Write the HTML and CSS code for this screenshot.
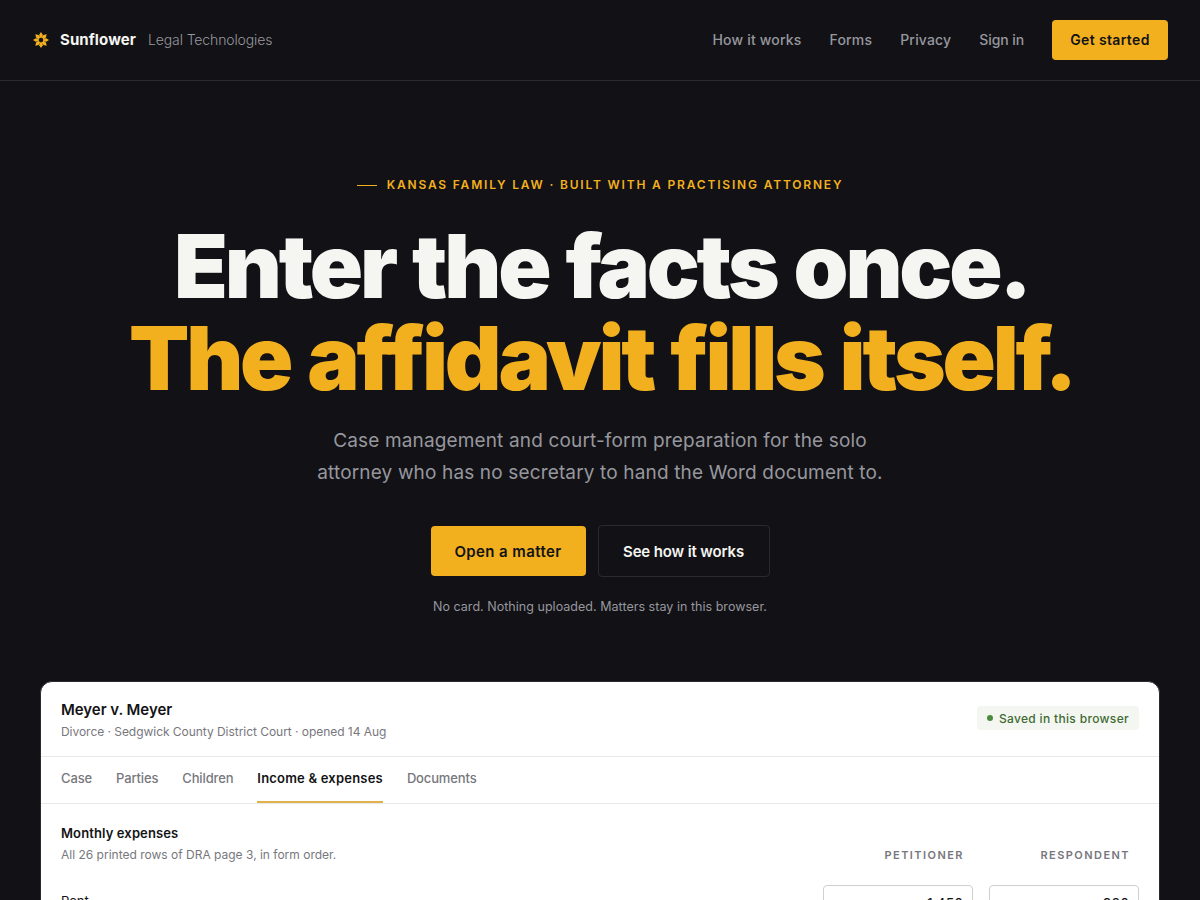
FILE: index.html
```html
<!DOCTYPE html>
<html lang="en">
<head>
<meta charset="utf-8">
<title>Sunflower Legal Technologies</title>
<link rel="stylesheet" href="styles.css">
</head>
<body>
<header class="topbar">
  <a class="brand" href="#">
    <svg class="brand-mark" viewBox="0 0 16 16" aria-hidden="true">
      <g fill="#f2b01e">
        <path d="M8 0 L9.8 2.8 L9.2 5.8 H6.8 L6.2 2.8 Z"/>
        <path d="M8 0 L9.8 2.8 L9.2 5.8 H6.8 L6.2 2.8 Z" transform="rotate(45 8 8)"/>
        <path d="M8 0 L9.8 2.8 L9.2 5.8 H6.8 L6.2 2.8 Z" transform="rotate(90 8 8)"/>
        <path d="M8 0 L9.8 2.8 L9.2 5.8 H6.8 L6.2 2.8 Z" transform="rotate(135 8 8)"/>
        <path d="M8 0 L9.8 2.8 L9.2 5.8 H6.8 L6.2 2.8 Z" transform="rotate(180 8 8)"/>
        <path d="M8 0 L9.8 2.8 L9.2 5.8 H6.8 L6.2 2.8 Z" transform="rotate(225 8 8)"/>
        <path d="M8 0 L9.8 2.8 L9.2 5.8 H6.8 L6.2 2.8 Z" transform="rotate(270 8 8)"/>
        <path d="M8 0 L9.8 2.8 L9.2 5.8 H6.8 L6.2 2.8 Z" transform="rotate(315 8 8)"/>
      </g>
    </svg>
    <span class="brand-name">Sunflower</span>
    <span class="brand-sub">Legal Technologies</span>
  </a>
  <nav class="nav">
    <a class="nav-link" href="#">How it works</a>
    <a class="nav-link" href="#">Forms</a>
    <a class="nav-link" href="#">Privacy</a>
    <a class="nav-link nav-link-tight" href="#">Sign in</a>
    <a class="btn-small" href="#">Get started</a>
  </nav>
</header>
<main>
  <section class="hero">
    <p class="eyebrow"><span class="eyebrow-rule"></span>KANSAS FAMILY LAW · BUILT WITH A PRACTISING ATTORNEY</p>
    <h1 class="headline">Enter the facts once.<br><span class="accent">The affidavit fills itself.</span></h1>
    <p class="lede">Case management and court-form preparation for the solo<br>attorney who has no secretary to hand the Word document to.</p>
    <div class="actions">
      <a class="btn btn-primary" href="#">Open a matter</a>
      <a class="btn btn-ghost" href="#">See how it works</a>
    </div>
    <p class="note">No card. Nothing uploaded. Matters stay in this browser.</p>
  </section>
  <section class="card">
    <div class="card-head">
      <div>
        <h2 class="case-title">Meyer v. Meyer</h2>
        <p class="case-meta">Divorce · Sedgwick County District Court · opened 14 Aug</p>
      </div>
      <span class="saved"><span class="saved-dot"></span>Saved in this browser</span>
    </div>
    <div class="tabs">
      <a href="#">Case</a>
      <a href="#">Parties</a>
      <a href="#">Children</a>
      <a class="active" href="#">Income &amp; expenses</a>
      <a href="#">Documents</a>
    </div>
    <div class="panel">
      <div class="panel-head">
        <div>
          <h3 class="panel-title">Monthly expenses</h3>
          <p class="panel-sub">All 26 printed rows of DRA page 3, in form order.</p>
        </div>
        <div class="cols">
          <span>PETITIONER</span>
          <span>RESPONDENT</span>
        </div>
      </div>
      <div class="row">
        <span class="row-label">Rent</span>
        <div class="cols">
          <span class="field">1,450</span>
          <span class="field">980</span>
        </div>
      </div>
    </div>
  </section>
</main>
</body>
</html>
```
FILE: styles.css
```css
* { box-sizing: border-box; }
html, body { margin: 0; padding: 0; }
body {
  background: #121216;
  color: #f5f5f2;
  font-family: "Inter", "Liberation Sans", sans-serif;
  height: 900px;
  overflow: hidden;
}
a { color: inherit; text-decoration: none; }
p, h1, h2, h3 { margin: 0; }

.topbar {
  height: 81px;
  border-bottom: 1px solid #2a2a30;
  padding: 0 32px;
  display: flex;
  align-items: center;
  justify-content: space-between;
}
.brand { display: flex; align-items: center; margin-left: 1px; padding-bottom: 1px; }
.brand-mark { width: 16px; height: 16px; margin-right: 11px; }
.brand-name { font-size: 15px; font-weight: 700; letter-spacing: 0.1px; margin-right: 12px; color: #f5f5f2; }
.brand-sub { font-size: 14px; font-weight: 300; color: #97979e; letter-spacing: -0.12px; }
.nav { display: flex; align-items: center; gap: 28px; font-size: 14px; font-weight: 500; color: #97979e; }
.nav-link { letter-spacing: 0.18px; padding-bottom: 1px; }
.nav-link-tight { letter-spacing: -0.1px; }
.btn-small {
  background: #f2b01e;
  color: #131316;
  height: 40px;
  width: 116px;
  border-radius: 4px;
  display: flex;
  align-items: center;
  justify-content: center;
  font-weight: 600;
  letter-spacing: 0.35px;
  padding-bottom: 1px;
}

.hero { padding-top: 96px; display: flex; flex-direction: column; align-items: center; text-align: center; }
.eyebrow { display: flex; align-items: center; gap: 10px; font-size: 12px; font-weight: 600; letter-spacing: 1.82px; color: #f2b01e; line-height: 16px; }
.eyebrow-rule { width: 20px; height: 1px; background: #f2b01e; }
.headline { margin-top: 27px; padding-left: 3px; font-size: 88px; font-weight: 900; line-height: 92px; letter-spacing: -3.2px; word-spacing: 2.7px; color: #f5f5f2; }
.accent { color: #f2b01e; }
.lede { margin-top: 21px; font-size: 19px; line-height: 32px; color: #97979e; letter-spacing: 0.15px; }
.actions { margin-top: 36px; display: flex; align-items: center; gap: 12px; }
.btn { height: 50px; display: flex; align-items: center; justify-content: center; border-radius: 4px; font-size: 15px; font-weight: 600; }
.btn-primary { width: 155px; background: #f2b01e; color: #131316; letter-spacing: 0.4px; }
.btn-ghost { width: 172px; height: 52px; border: 1px solid #2a2a30; color: #f5f5f2; letter-spacing: -0.14px; }
.note { margin-top: 21px; font-size: 12.5px; line-height: 18px; color: #97979e; letter-spacing: 0.03px; }

.card {
  margin: 65px 40px 0;
  background: #fff;
  border: 1px solid #2a2a30;
  border-radius: 12px;
  color: #131316;
}
.card-head { height: 75px; padding: 1px 20px 0; display: flex; align-items: center; justify-content: space-between; border-bottom: 1px solid #e8e8e5; }
.case-title { font-size: 15px; font-weight: 600; letter-spacing: -0.05px; line-height: 20px; }
.case-meta { margin-top: 4px; font-size: 12px; line-height: 16px; color: #77777d; letter-spacing: -0.04px; }
.saved { height: 24px; padding: 0 10px; margin-bottom: 3px; background: #f4f6f1; border-radius: 4px; display: flex; align-items: center; gap: 6px; font-size: 12px; font-weight: 500; letter-spacing: 0.33px; color: #3f6b32; }
.saved-dot { width: 6px; height: 6px; border-radius: 50%; background: #4c8a3d; }
.tabs { display: flex; gap: 24px; padding: 0 20px; height: 47px; border-bottom: 1px solid #e8e8e5; font-size: 13px; font-weight: 500; color: #77777d; letter-spacing: -0.14px; }
.tabs a { display: flex; align-items: center; border-bottom: 2px solid transparent; padding-bottom: 3px; }
.tabs a.active { color: #131316; font-weight: 600; letter-spacing: 0.2px; border-bottom-color: #e0b24c; }
.panel { padding: 20px 20px 24px; }
.panel-head { display: flex; justify-content: space-between; align-items: flex-end; }
.panel-title { font-size: 13px; font-weight: 600; letter-spacing: 0.12px; line-height: 18px; }
.panel-sub { margin-top: 5px; font-size: 12px; line-height: 16px; color: #77777d; letter-spacing: 0; }
.cols { display: flex; gap: 16px; }
.cols > span { width: 150px; text-align: right; padding-right: 9px; }
.panel-head .cols > span { font-size: 11px; font-weight: 600; letter-spacing: 1.45px; color: #77777d; line-height: 16px; }
.row { margin-top: 22px; display: flex; justify-content: space-between; align-items: center; }
.row-label { font-size: 13px; color: #131316; margin-bottom: 4px; }
.field { height: 36px; border: 1px solid #cfcfcb; border-radius: 4px; font-size: 14px; display: flex; align-items: center; justify-content: flex-end; }
```
